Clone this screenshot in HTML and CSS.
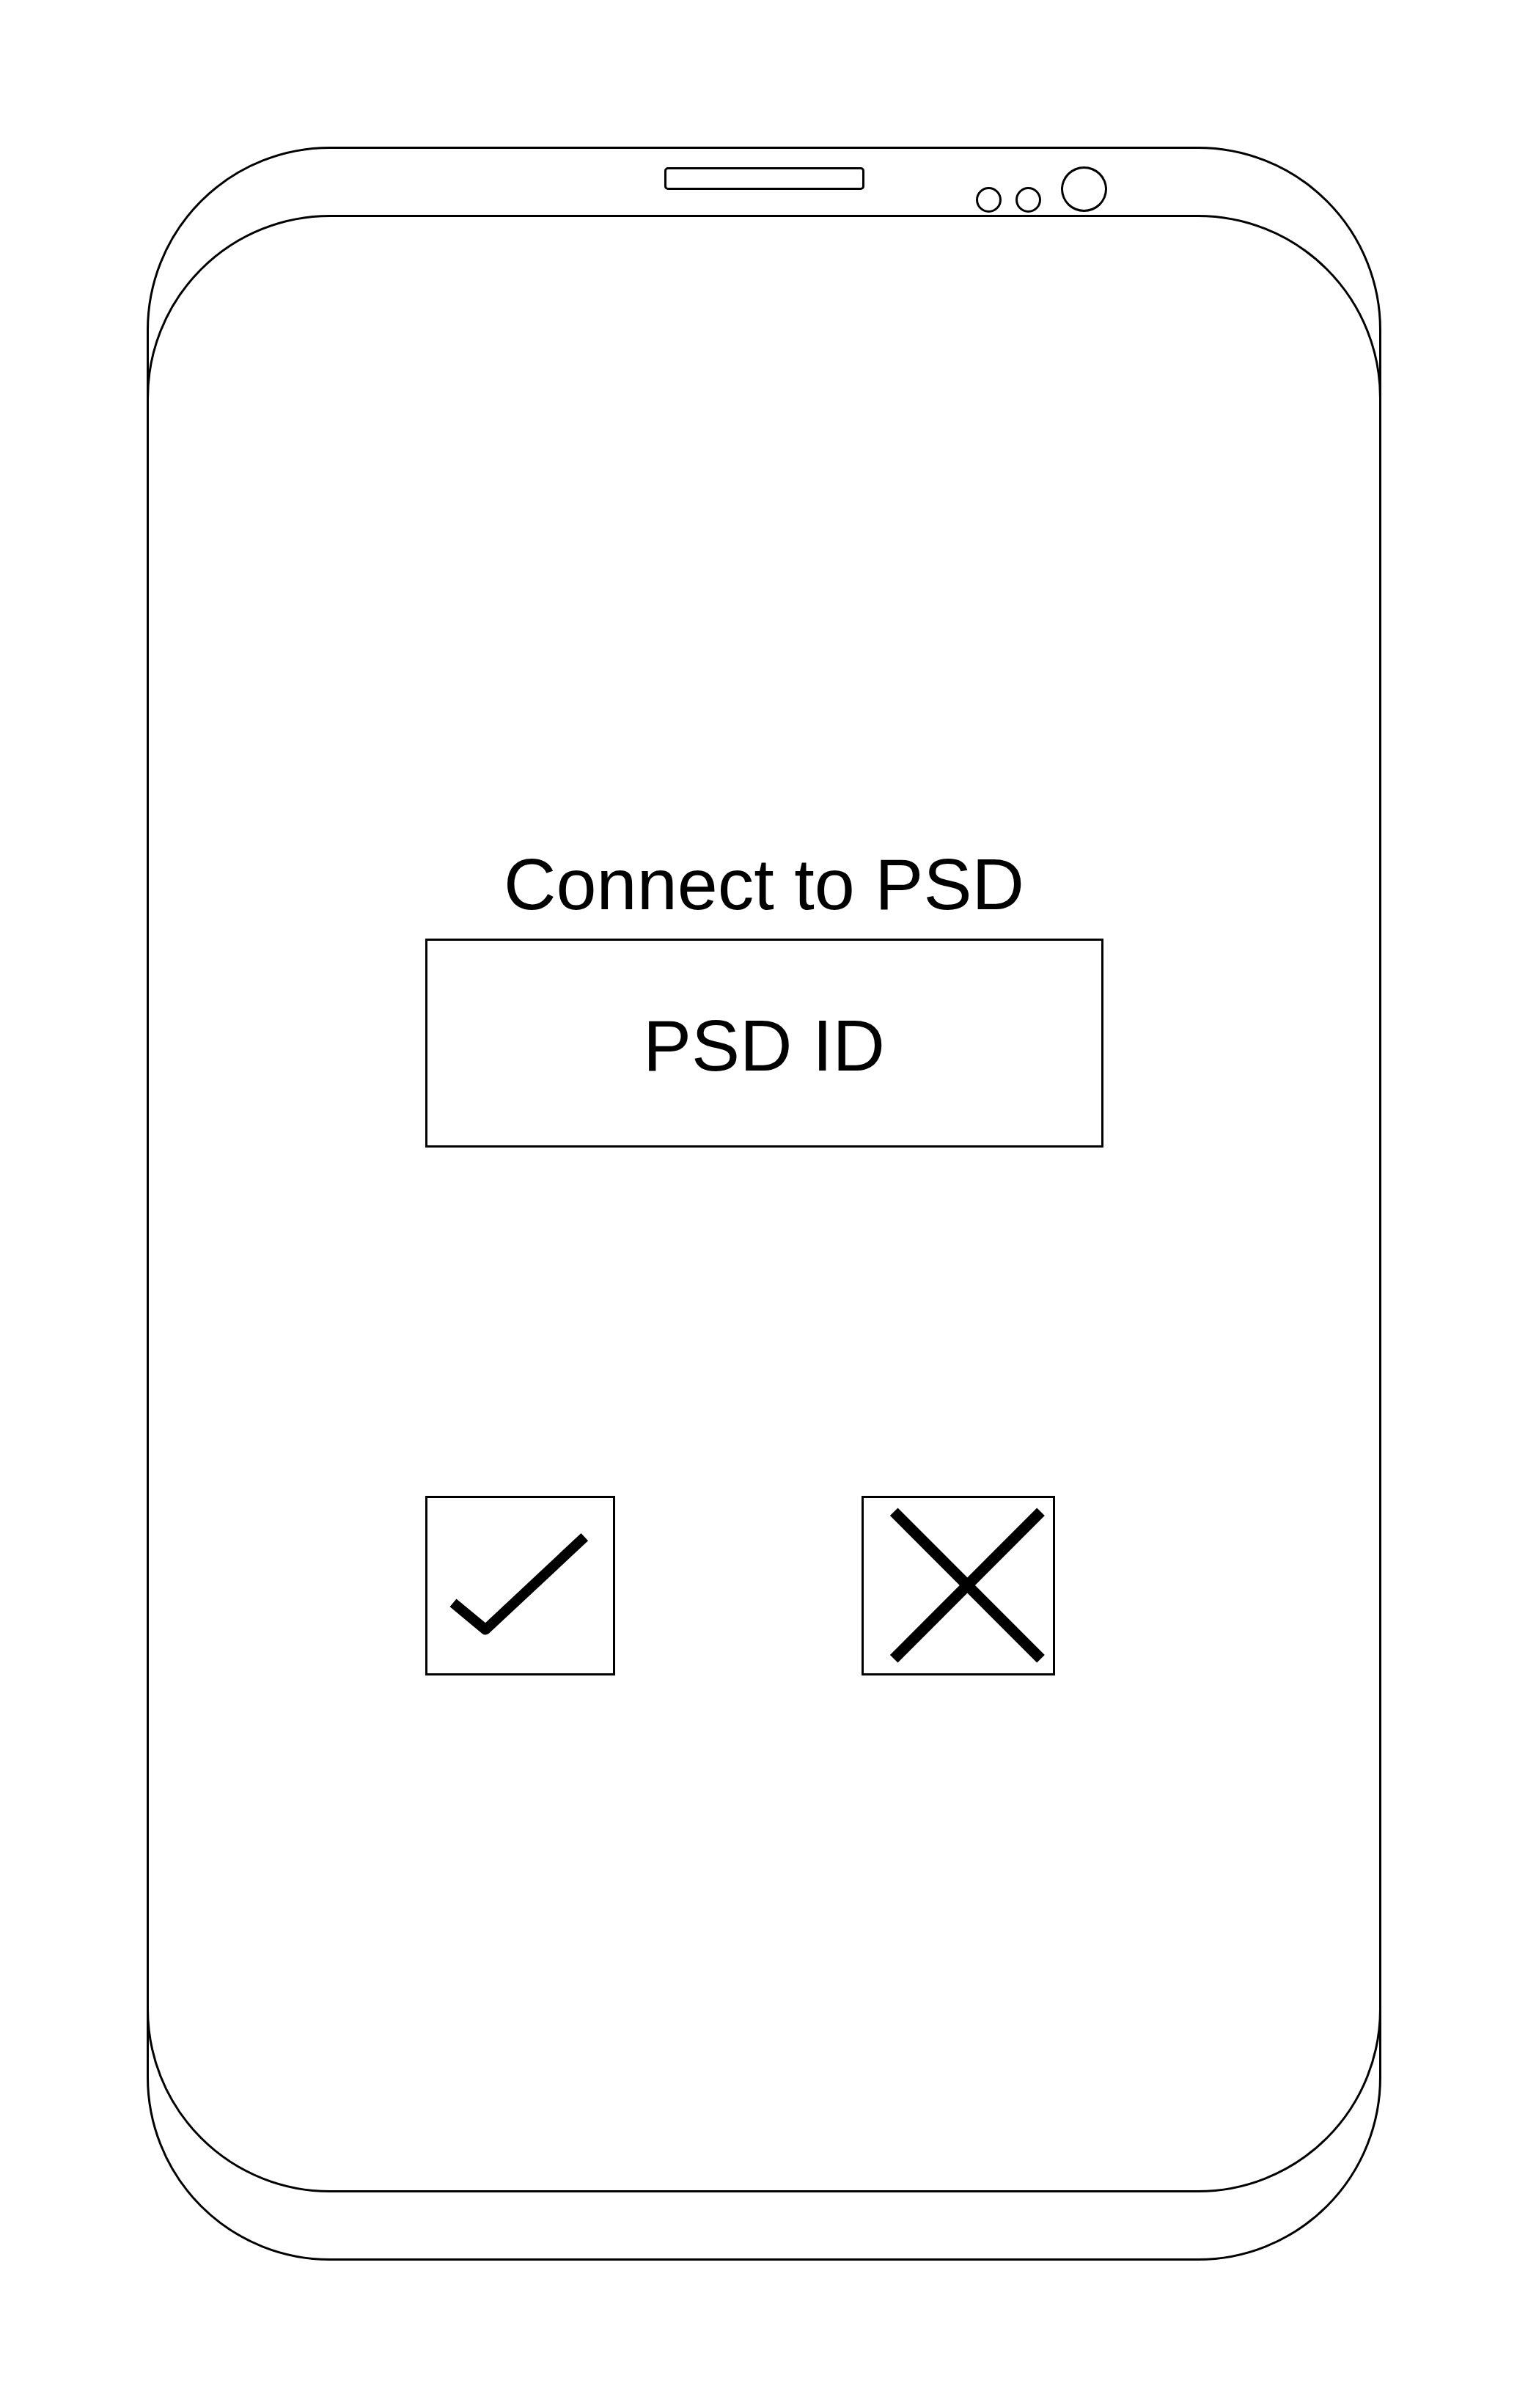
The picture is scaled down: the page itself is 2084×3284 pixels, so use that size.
FILE: index.html
```html
<!DOCTYPE html>
<html lang="en">
<head>
<meta charset="utf-8">
<title>Connect to PSD</title>
<link rel="stylesheet" href="styles.css">
</head>
<body>
<div class="device">
  <div class="device-back"></div>
  <div class="phone">
    <div class="phone-top">
      <div class="speaker"></div>
      <div class="sensor sensor-1"></div>
      <div class="sensor sensor-2"></div>
      <div class="camera"></div>
    </div>
    <div class="screen">
      <h1 class="title">Connect to PSD</h1>
      <div class="id-field">PSD ID</div>
      <div class="actions">
        <div class="action action-ok">
          <svg viewBox="0 0 253 239" xmlns="http://www.w3.org/2000/svg">
            <polyline points="35,142.8 79.2,179.5 214.3,53.2" fill="none" stroke="#000" stroke-width="14" stroke-linejoin="round" stroke-linecap="butt"/>
          </svg>
        </div>
        <div class="action action-cancel">
          <svg viewBox="0 0 258 239" xmlns="http://www.w3.org/2000/svg">
            <line x1="41.2" y1="18.8" x2="241.5" y2="219.2" stroke="#000" stroke-width="15"/>
            <line x1="241.5" y1="18.8" x2="41.2" y2="219.2" stroke="#000" stroke-width="15"/>
          </svg>
        </div>
      </div>
    </div>
  </div>
</div>
</body>
</html>
```
FILE: styles.css
```css
* {
  box-sizing: border-box;
}

html,
body {
  margin: 0;
  background: #fff;
}

body {
  font-family: "Liberation Sans", Arial, sans-serif;
  color: #000;
}

.device {
  display: grid;
  width: 1684px;
  margin: 200px 0 0 200px;
}

.device-back,
.phone {
  grid-area: 1 / 1;
  height: 2790px;
  border: 3px solid #000;
  border-radius: 250px;
}

.device-back {
  margin-top: 93px;
}

.phone {
  margin-bottom: 93px;
}

.phone-top {
  display: flex;
  align-items: flex-start;
  height: 87px;
  padding-left: 703px;
}

.speaker {
  width: 273px;
  height: 31px;
  margin-top: 25px;
  border: 3px solid #000;
  border-radius: 5px;
}

.sensor {
  width: 35px;
  height: 35px;
  margin-top: 52px;
  border: 3px solid #000;
  border-radius: 50%;
}

.sensor-1 {
  margin-left: 152px;
}

.sensor-2 {
  margin-left: 19px;
}

.camera {
  width: 63px;
  height: 62px;
  margin-top: 24px;
  margin-left: 27px;
  border: 3px solid #000;
  border-radius: 50%;
}

.screen {
  display: flex;
  flex-direction: column;
  align-items: center;
  padding-top: 866px;
}

.title {
  margin: 0;
  font-size: 99px;
  font-weight: 400;
  line-height: 99px;
}

.id-field {
  display: flex;
  align-items: center;
  justify-content: center;
  width: 925px;
  height: 285px;
  margin-top: 25px;
  padding-top: 5px;
  border: 3px solid #000;
  font-size: 99px;
  line-height: 99px;
}

.actions {
  display: flex;
  width: 925px;
  gap: 336px;
  margin-top: 475px;
}

.action {
  height: 245px;
  border: 3px solid #000;
}

.action-ok {
  width: 259px;
}

.action-cancel {
  width: 264px;
}

.action svg {
  display: block;
  width: 100%;
  height: 100%;
}
```
